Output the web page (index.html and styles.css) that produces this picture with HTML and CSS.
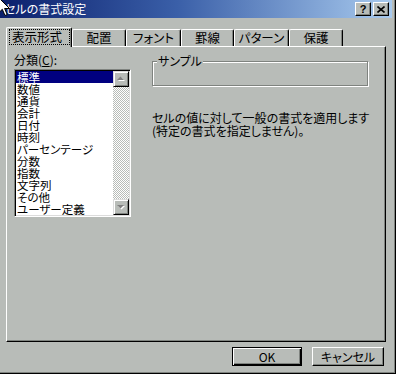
FILE: index.html
```html
<!DOCTYPE html>
<html lang="ja">
<head>
<meta charset="utf-8">
<link rel="stylesheet" href="styles.css">
</head>
<body>
<div class="dialog">
  <div class="titlebar">
    <span class="title">セルの書式設定</span>
    <div class="tb-buttons">
      <span class="tb-btn help">?</span>
      <span class="tb-btn close"><svg width="8" height="7" viewBox="0 0 8 7"><path d="M0.5 0.5 L7.5 6.5 M7.5 0.5 L0.5 6.5" stroke="#000" stroke-width="1.6" fill="none"/></svg></span>
    </div>
  </div>
  <div class="body">
    <div class="tabs">
      <div class="tab active"><span class="focus">表示形式</span></div>
      <div class="tab t54">配置</div>
      <div class="tab t55">フォント</div>
      <div class="tab t53">罫線</div>
      <div class="tab t55">パターン</div>
      <div class="tab t54">保護</div>
    </div>
    <div class="panel">
      <div class="left">
        <div class="label">分類(<u>C</u>):</div>
        <div class="listbox">
          <ul class="items">
            <li class="selected">標準</li>
            <li>数値</li>
            <li>通貨</li>
            <li>会計</li>
            <li>日付</li>
            <li>時刻</li>
            <li>パーセンテージ</li>
            <li>分数</li>
            <li>指数</li>
            <li>文字列</li>
            <li>その他</li>
            <li>ユーザー定義</li>
          </ul>
          <div class="scrollbar">
            <div class="sb-btn"><svg width="14" height="14" viewBox="0 0 14 14"><polygon points="4,9 7.5,5.5 11,9" fill="#fff"/><polygon points="3,8 6.5,4.5 10,8" fill="#808080"/></svg></div>
            <div class="track"></div>
            <div class="sb-btn"><svg width="14" height="14" viewBox="0 0 14 14"><polygon points="4,6 11,6 7.5,9.5" fill="#fff"/><polygon points="3,5 10,5 6.5,8.5" fill="#808080"/></svg></div>
          </div>
        </div>
      </div>
      <div class="right">
        <div class="group"><span class="group-label">サンプル</span></div>
        <p class="desc">セルの値に対して一般の書式を適用します<br>(特定の書式を指定しません)。</p>
      </div>
    </div>
    <div class="footer">
      <button class="btn btn-ok">OK</button>
      <button class="btn btn-cancel">キャンセル</button>
    </div>
  </div>
  <svg class="cursor" width="12" height="20" viewBox="0 0 12 20"><path d="M0.5 0.5 L0.5 16 L4.3 12.3 L7 18.5 L9.2 17.5 L6.6 11.5 L11.5 11.5 Z" fill="#fff" stroke="#000" stroke-width="1"/></svg>
</div>
</body>
</html>
```

FILE: styles.css
```css
html, body {
  margin: 0;
  padding: 0;
  background: #b8bcb8;
}

.dialog {
  position: relative;
  width: 396px;
  height: 374px;
  box-sizing: border-box;
  padding-right: 4px;
  background: #b8bcb8;
  overflow: hidden;
  font-family: "Noto Sans CJK JP", sans-serif;
  font-size: 12px;
  font-feature-settings: "palt";
  color: #000;
  box-shadow: inset -1px -1px 0 #000, inset -2px -2px 0 #7f837f;
}

.titlebar {
  height: 18px;
  display: flex;
  align-items: center;
  justify-content: space-between;
  padding: 0 3px 0 4px;
  background: linear-gradient(90deg, #0b1f6c 0%, #3a5fa8 45%, #a8caee 100%);
  color: #fff;
}

.title {
  line-height: 18px;
  font-size: 12px;
}

.tb-buttons {
  display: flex;
  gap: 2px;
}

.tb-btn {
  width: 16px;
  height: 14px;
  box-sizing: border-box;
  background: #b8bcb8;
  border: 1px solid;
  border-color: #fff #000 #000 #fff;
  box-shadow: inset -1px -1px 0 #7f837f;
  display: flex;
  align-items: center;
  justify-content: center;
  color: #000;
}

.help {
  font-family: "Liberation Sans", sans-serif;
  font-weight: bold;
  font-size: 11px;
  line-height: 12px;
}

.body {
  padding: 9px 6px 0 6px;
}

.tabs {
  display: flex;
  height: 19px;
  align-items: flex-end;
  position: relative;
  z-index: 1;
}

.tab {
  height: 17px;
  box-sizing: border-box;
  border: 1px solid;
  border-color: #fff #000 transparent #fff;
  border-bottom: none;
  border-radius: 2px 2px 0 0;
  box-shadow: inset -1px 0 0 #7f837f;
  display: flex;
  align-items: center;
  justify-content: center;
  line-height: 14px;
  font-size: 12.5px;
  background: #b8bcb8;
}

.tab.active {
  width: 66px;
  height: 20px;
  margin-bottom: -1px;
  padding-bottom: 1px;
  justify-content: flex-start;
  padding-left: 3px;
}

.t53 { width: 53px; }
.t54 { width: 54px; }
.t55 { width: 55px; }

.focus {
  outline: 1px dotted #000;
  padding: 0 7px 1px 2px;
  line-height: 13px;
}

.panel {
  width: 380px;
  height: 296px;
  box-sizing: border-box;
  border: 1px solid;
  border-color: #fff #000 #000 #fff;
  box-shadow: inset -1px -1px 0 #7f837f;
  padding: 6px 0 0 7px;
  display: flex;
  align-items: flex-start;
}

.left {
  width: 117px;
}

.label {
  line-height: 14px;
  margin-bottom: 2px;
}

.listbox {
  width: 117px;
  height: 148px;
  box-sizing: border-box;
  border: 1px solid;
  border-color: #7f837f #fff #fff #7f837f;
  box-shadow: inset 1px 1px 0 #000, inset -1px -1px 0 #dcdcdc;
  padding: 1px;
  display: flex;
  background: #fff;
}

.items {
  flex: 1;
  list-style: none;
  margin: 0;
  padding: 0;
  background: #fff;
}

.items li {
  height: 12px;
  line-height: 12px;
  font-size: 11.5px;
  padding-left: 1px;
  white-space: nowrap;
}

.items li.selected {
  background: #000080;
  color: #fff;
}

.scrollbar {
  width: 16px;
  display: flex;
  flex-direction: column;
}

.sb-btn {
  width: 16px;
  height: 16px;
  box-sizing: border-box;
  background: #b8bcb8;
  border: 1px solid;
  border-color: #dcdcdc #000 #000 #dcdcdc;
  box-shadow: inset 1px 1px 0 #fff, inset -1px -1px 0 #7f837f;
  display: flex;
  align-items: center;
  justify-content: center;
}

.track {
  flex: 1;
  background: repeating-conic-gradient(#fff 0 25%, #b8bcb8 0 50%) 0 0 / 2px 2px;
}

.right {
  margin-left: 21px;
}

.group {
  position: relative;
  margin-top: 8px;
  width: 216px;
  height: 25px;
  box-sizing: border-box;
  border: 1px solid #7f837f;
  box-shadow: inset 1px 1px 0 #fff, 1px 1px 0 #fff;
}

.group-label {
  position: absolute;
  top: -8px;
  left: 4px;
  padding: 0 1px;
  line-height: 14px;
  background: #b8bcb8;
}

.desc {
  margin: 25px 0 0 0;
  line-height: 13px;
  white-space: nowrap;
}

.footer {
  display: flex;
  justify-content: flex-end;
  gap: 10px;
  margin-top: 5px;
  padding-right: 2px;
}

.btn {
  height: 19px;
  box-sizing: border-box;
  background: #b8bcb8;
  font-family: "Noto Sans CJK JP", sans-serif;
  font-size: 12px;
  font-feature-settings: "palt";
  line-height: 14px;
  padding: 0;
  color: #000;
  border: 1px solid;
}

.btn-ok {
  width: 70px;
  border-color: #000;
  box-shadow: inset 1px 1px 0 #fff, inset -1px -1px 0 #000, inset -2px -2px 0 #7f837f;
}

.btn-cancel {
  width: 72px;
  border-color: #fff #000 #000 #fff;
  box-shadow: inset -1px -1px 0 #7f837f;
}

.cursor {
  position: absolute;
  left: -2px;
  top: -3px;
}
```
